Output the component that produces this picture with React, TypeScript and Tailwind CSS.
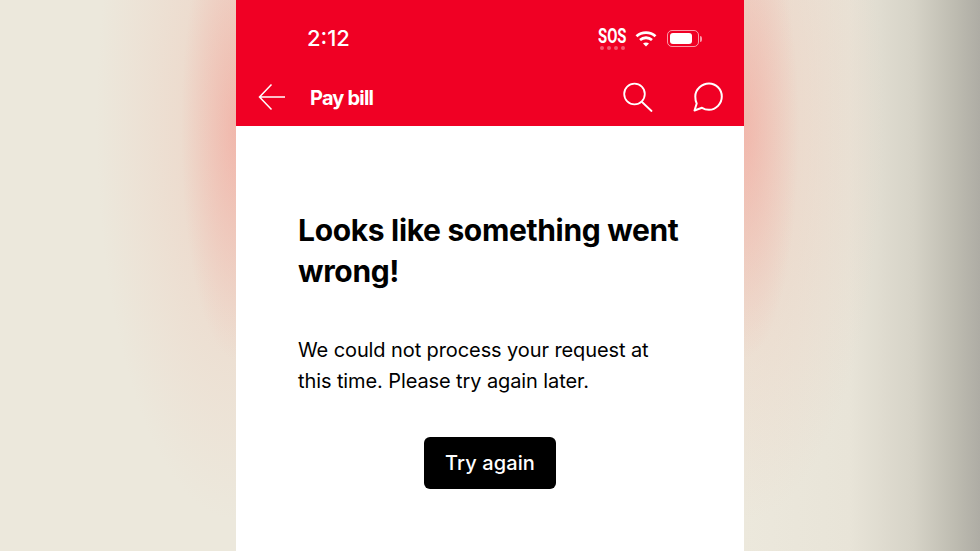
const font = { inter: "font-['Inter',sans-serif]" };

const BackArrow = () => (
  <svg width="28" height="28" viewBox="0 0 28 28" fill="none" stroke="#fff" strokeWidth="1.5">
    <path d="M27 14H1.500M13.500 1.500L1.500 14l12 12.500" />
  </svg>
);

const SearchIcon = () => (
  <svg width="30" height="30" viewBox="0 0 30 30" fill="none" stroke="#fff" strokeWidth="1.8" strokeLinecap="round">
    <circle cx="11.500" cy="12" r="10.300" />
    <path d="M19 20l9.500 9" />
  </svg>
);

const ChatBubble = () => (
  <svg width="30" height="30" viewBox="0 0 30 30" fill="none" stroke="#fff" strokeWidth="2" strokeLinejoin="round">
    <path d="M16 1.500c7 0 12.800 5.800 12.800 13S23 27.800 16 27.800c-2.600 0-5-.7-7-2L1.500 28.500l2.200-7C2.600 19.600 2.300 17 2.300 14.500 2.300 7.300 9 1.500 16 1.500z" />
  </svg>
);

const Wifi = () => (
  <svg width="22" height="17" viewBox="0 0 22 17" fill="none" stroke="#fff" strokeWidth="2.800">
    <path d="M1.500 6.200c5.400-4.900 13.600-4.900 19 0" />
    <path d="M5 10c3.500-3 8.500-3 12 0" />
    <path d="M11 16.500l-3-3c1.700-1.400 4.300-1.400 6 0z" fill="#fff" stroke="none" />
  </svg>
);

const Battery = () => (
  <div className="flex items-center">
    <div className="w-[32px] h-[17px] rounded-[5px] border border-white/60 p-[2px]">
      <div className="w-[22px] h-full rounded-[3px] bg-white" />
    </div>
    <div className="w-[2px] h-[6px] ml-[1px] rounded-r-sm bg-white/60" />
  </div>
);

const Sos = () => (
  <div className="w-[27px] flex flex-col items-center">
    <span className="font-['Roboto',sans-serif] font-bold text-[19px] leading-[14px] whitespace-nowrap text-white scale-x-[0.78] scale-y-[1.05]">SOS</span>
    <div className="flex gap-[3px] mt-[2px]">
      {[0, 1, 2, 3].map((i) => (
        <span key={i} className="w-[4px] h-[4px] rounded-full bg-white/35" />
      ))}
    </div>
  </div>
);

export default function App() {
  return (
    <div className={`flex w-[980px] h-[551px] overflow-hidden bg-[#ece8dc] ${font.inter}`}>
      <div className="w-[236px] h-full bg-[radial-gradient(ellipse_55px_230px_at_100%_130px,rgba(243,165,155,0.6),rgba(243,165,155,0)_100%),radial-gradient(ellipse_140px_400px_at_100%_120px,rgba(238,205,190,0.75),rgba(236,232,220,0)_100%)]" />

      <main className="w-[508px] h-full bg-white flex flex-col">
        <header className="h-[126px] bg-[#f00024] flex flex-col text-white">
          <div className="h-[69px] pt-[24px] pl-[71px] pr-[42px] flex items-start justify-between">
            <span className="text-[22px] leading-[28px] font-medium">2:12</span>
            <div className="flex items-start gap-[9px] pt-[6px]">
              <Sos />
              <Wifi />
              <div className="ml-[1px]">
                <Battery />
              </div>
            </div>
          </div>
          <div className="flex-1 flex items-center pl-[22px] pr-[21px] pb-[1px]">
            <BackArrow />
            <h1 className="ml-[24px] mt-[2px] text-[20px] font-bold tracking-[-0.8px]">Pay bill</h1>
            <div className="ml-auto flex items-center gap-[40px]">
              <SearchIcon />
              <ChatBubble />
            </div>
          </div>
        </header>

        <section className="flex-1 pt-[84px] px-[62px] flex flex-col">
          <h2 className="text-[30px] leading-[41px] font-bold text-black tracking-[-0.33px]">
            Looks like something went wrong!
          </h2>
          <p className="mt-[43px] text-[20px] leading-[31px] text-black tracking-[-0.1px]">
            We could not process your request at this time. Please try again later.
          </p>
          <button className="self-center mt-[40px] w-[132px] h-[52px] rounded-[6px] bg-black text-white text-[20px] font-medium tracking-[0.1px]">
            Try again
          </button>
        </section>
      </main>

      <div className="flex-1 h-full bg-[radial-gradient(ellipse_55px_230px_at_0%_130px,rgba(243,165,155,0.6),rgba(243,165,155,0)_100%),radial-gradient(ellipse_140px_400px_at_0%_120px,rgba(238,205,190,0.75),rgba(236,232,220,0)_100%),linear-gradient(to_right,#ece8dc_0%,#e8e4d8_45%,#d6d3c7_72%,#bdbbb0_90%,#aeaca4_100%)]" />
    </div>
  );
}
